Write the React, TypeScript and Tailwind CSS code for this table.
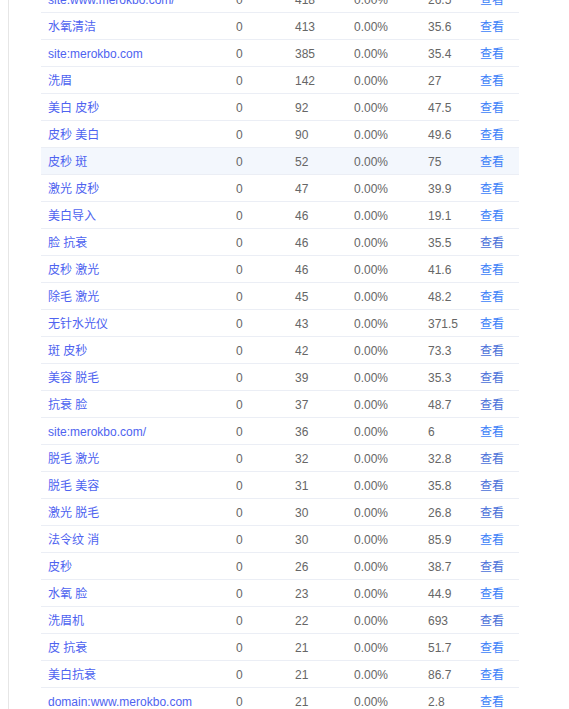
import React from "react";

type Row = [string, string, string, boolean?];

const rows: Row[] = [
  ["site:www.merokbo.com/", "418", "26.5"],
  ["水氧清洁", "413", "35.6"],
  ["site:merokbo.com", "385", "35.4"],
  ["洗眉", "142", "27"],
  ["美白 皮秒", "92", "47.5"],
  ["皮秒 美白", "90", "49.6"],
  ["皮秒 斑", "52", "75"],
  ["激光 皮秒", "47", "39.9"],
  ["美白导入", "46", "19.1"],
  ["脸 抗衰", "46", "35.5", true],
  ["皮秒 激光", "46", "41.6"],
  ["除毛 激光", "45", "48.2"],
  ["无针水光仪", "43", "371.5"],
  ["斑 皮秒", "42", "73.3", true],
  ["美容 脱毛", "39", "35.3", true],
  ["抗衰 脸", "37", "48.7", true],
  ["site:merokbo.com/", "36", "6"],
  ["脱毛 激光", "32", "32.8", true],
  ["脱毛 美容", "31", "35.8", true],
  ["激光 脱毛", "30", "26.8", true],
  ["法令纹 消", "30", "85.9"],
  ["皮秒", "26", "38.7", true],
  ["水氧 脸", "23", "44.9"],
  ["洗眉机", "22", "693", true],
  ["皮 抗衰", "21", "51.7"],
  ["美白抗衰", "21", "86.7"],
  ["domain:www.merokbo.com", "21", "2.8"],
];

export default function App() {
  return (
    <div
      className="w-[569px] h-[709px] overflow-hidden bg-white relative"
      style={{ fontFamily: '"Liberation Sans", "Noto Sans CJK SC", sans-serif' }}
    >
      <div className="flex h-full">
        <div className="w-[8px] shrink-0" />
        <div className="w-px shrink-0 bg-[#e6e6e6] h-full" />
        <div className="pl-[32px] w-[511px]">
          <div className="-mt-[14px] w-[478px]">
            {rows.map((r, i) => {
              const [kw, n, cost, dark] = r;
              const hl = i === 6;
              return (
                <div
                  key={i}
                  className={`flex h-[27px] items-center pt-[2px] border-b border-[#ebeef5] text-[12px] text-[#666666] ${
                    hl ? "bg-[#f3f7fd]" : ""
                  }`}
                >
                  <div className="w-[188px] pl-[7px] text-[#4e63f0] whitespace-nowrap">{kw}</div>
                  <div className="w-[59px] pl-[7px]">0</div>
                  <div className="w-[59px] pl-[7px]">{n}</div>
                  <div className="w-[74px] pl-[7px]">0.00%</div>
                  <div className="w-[52px] pl-[7px]">{cost}</div>
                  <div className={`w-[46px] pl-[7px] ${dark ? "text-[#4a6fd8]" : "text-[#3b7ef8]"}`}>查看</div>
                </div>
              );
            })}
          </div>
        </div>
      </div>
    </div>
  );
}
